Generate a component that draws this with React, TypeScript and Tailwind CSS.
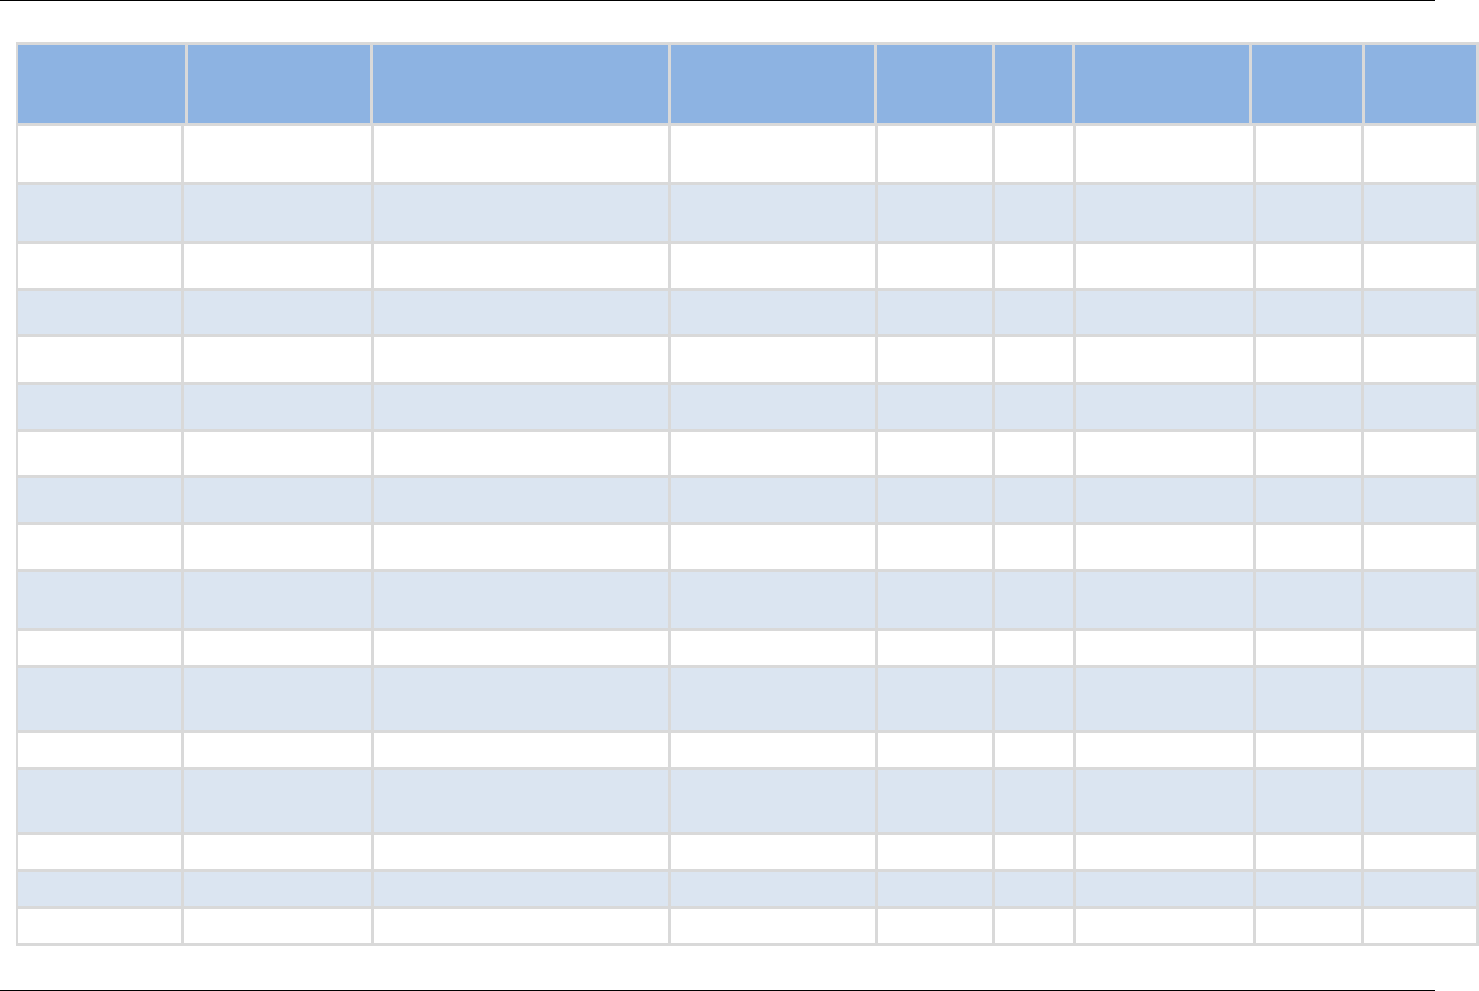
const headerCols = "grid-cols-[167px_182px_295px_203px_115px_77px_174px_110px_111px]";
const bodyCols = "grid-cols-[163px_187px_294px_204px_114px_78px_177px_105px_112px]";

// content heights of the body rows, top to bottom
const rows = [56, 56, 44, 43, 45, 44, 43, 44, 44, 56, 34, 62, 34, 62, 34, 34, 34];

function Row({ height, shaded }: { height: number; shaded: boolean }) {
  return (
    <div className={`grid ${bodyCols} gap-x-[3px]`}>
      {Array.from({ length: 9 }).map((_, i) => (
        <div
          key={i}
          className={shaded ? "bg-[#dbe5f1]" : "bg-white"}
          style={{ height }}
        />
      ))}
    </div>
  );
}

export default function App() {
  return (
    <div className="w-[1479px] h-[991px] bg-white flex flex-col">
      <div className="h-px w-[1435px] bg-black" />

      <div className="mt-[41px] ml-4 w-[1463px] bg-[#d9d9d9] pt-[3px] pl-[2px] pr-[3px] pb-[3px] flex flex-col gap-y-[3px]">
        <div className={`grid ${headerCols} gap-x-[3px]`}>
          {Array.from({ length: 9 }).map((_, i) => (
            <div key={i} className="h-[78px] bg-[#8db3e2]" />
          ))}
        </div>
        {rows.map((h, i) => (
          <Row key={i} height={h} shaded={i % 2 === 1} />
        ))}
      </div>

      <div className="mt-[44px] h-px w-[1435px] bg-black" />
    </div>
  );
}
